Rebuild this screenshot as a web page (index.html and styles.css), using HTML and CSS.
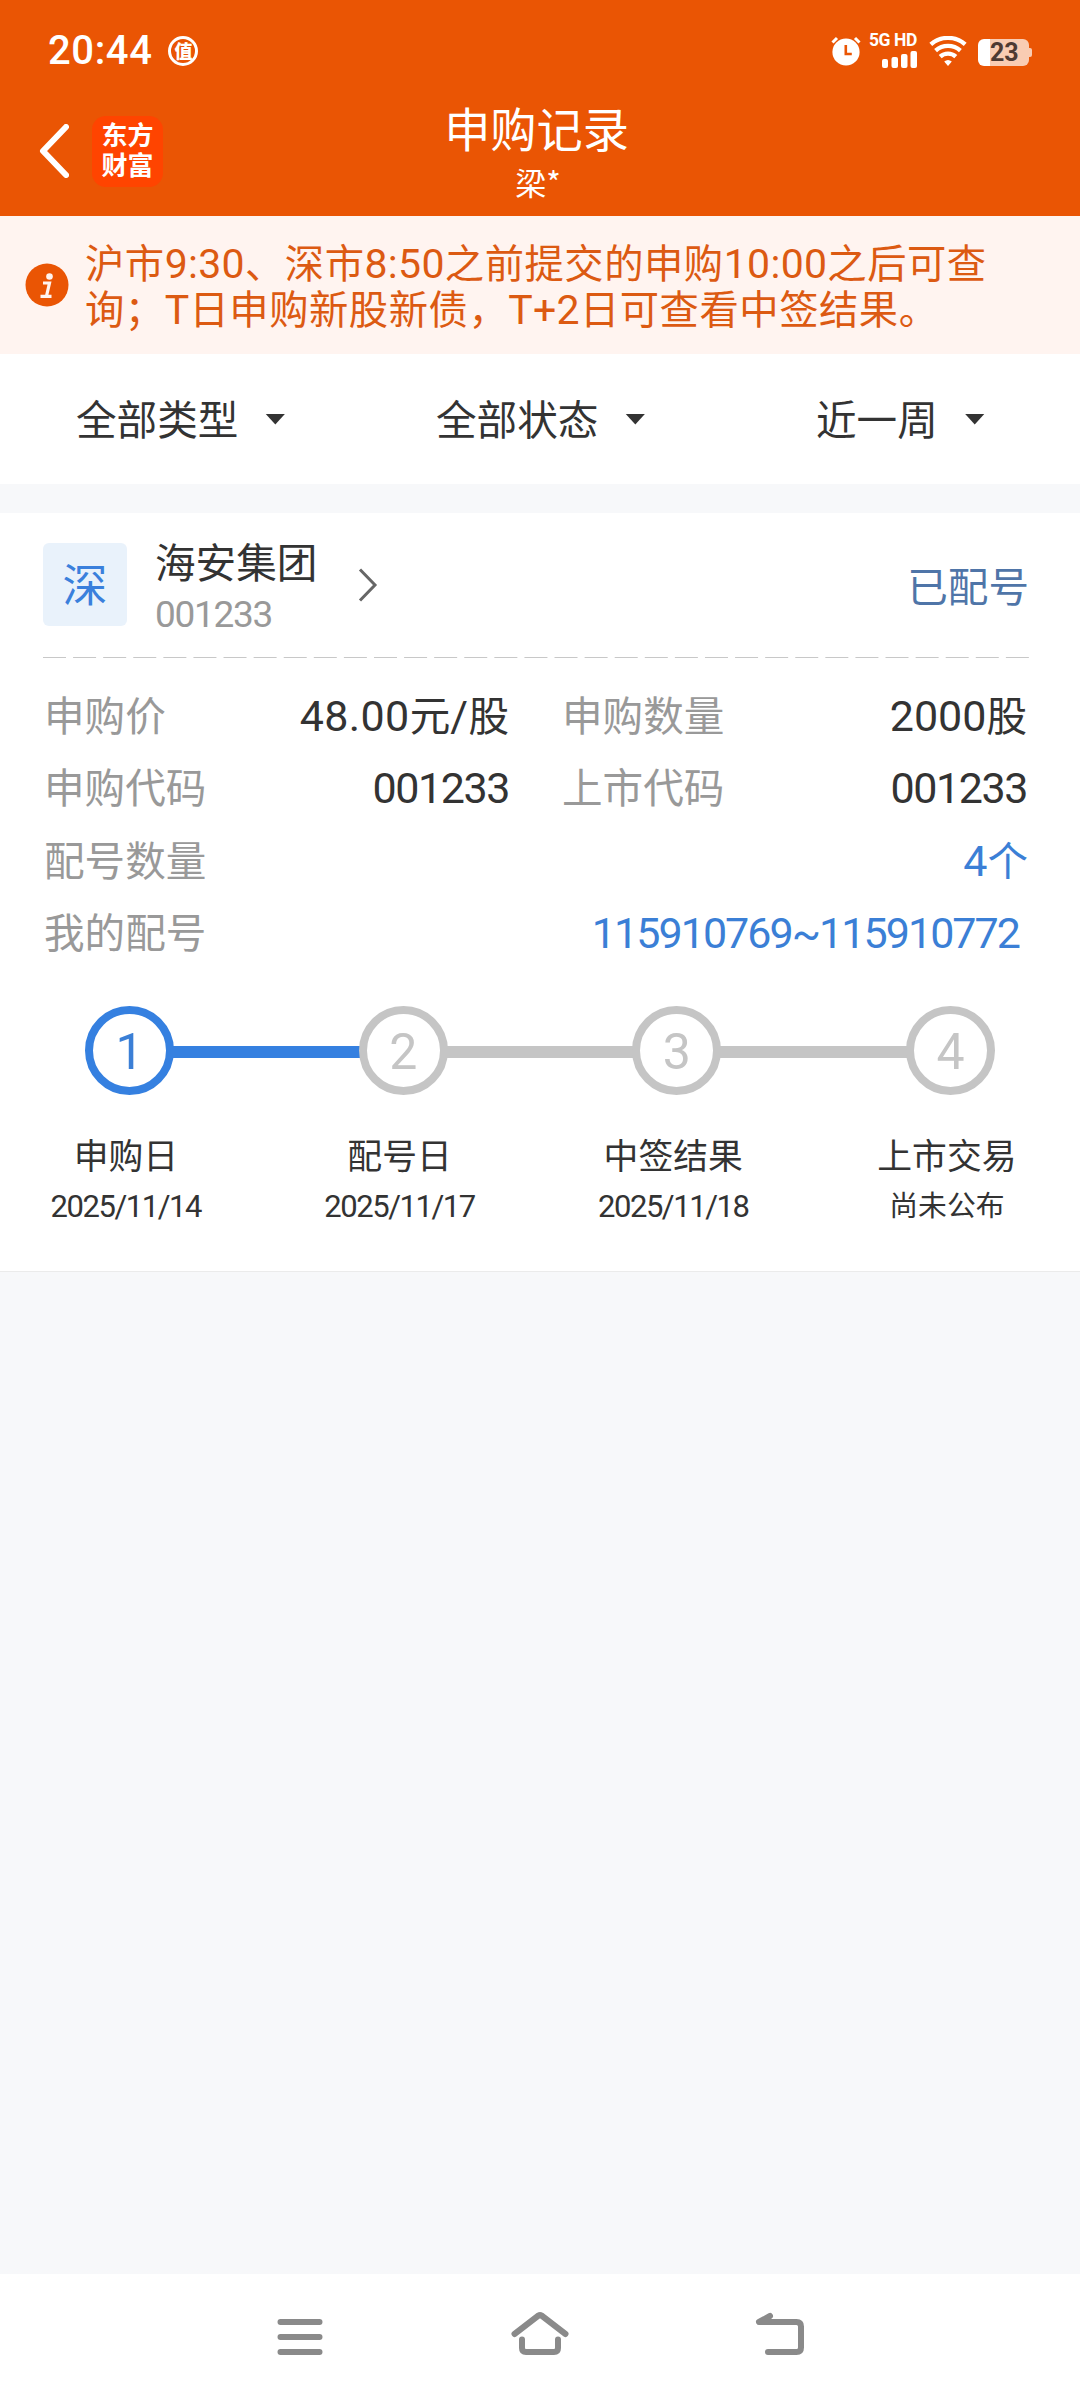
FILE: index.html
```html
<!DOCTYPE html>
<html lang="zh-CN">
<head>
<meta charset="utf-8">
<title>申购记录</title>
<link rel="stylesheet" href="styles.css">
</head>
<body>
<div class="screen">
  <header class="header">
    <div class="status">
      <div class="status-left">
        <span class="clock">20:44</span>
        <span class="app-badge">值</span>
      </div>
      <div class="status-right">
        <svg class="alarm" width="30" height="30" viewBox="0 0 30 30"><circle cx="15" cy="16" r="13.6" fill="#fff"/><path d="M1.5 6.5 6 2M28.500 6.500 24 2" stroke="#fff" stroke-width="3"/><path d="M14.800 9v9h6" fill="none" stroke="#ea5504" stroke-width="2.600"/></svg>
        <div class="cell">
          <span class="cell-text">5G HD</span>
          <svg width="35" height="17" viewBox="0 0 35 17" fill="#fff"><rect x="0" y="8" width="6" height="9" rx="2"/><rect x="9.500" y="6" width="6.500" height="11" rx="2"/><rect x="19" y="3" width="6.500" height="14" rx="2"/><rect x="28.500" y="0" width="6.500" height="17" rx="2"/></svg>
        </div>
        <svg class="wifi" width="38" height="30" viewBox="0 0 38 30" fill="none" stroke="#fff" stroke-width="4.300"><path d="M1.800 8.400a26 26 0 0 1 34.400 0"/><path d="M6.600 14.600a18.500 18.500 0 0 1 24.800 0"/><path d="M11.200 20.700a11.500 11.500 0 0 1 15.600 0"/><path d="M15.200 25.600Q19 22.300 22.800 25.600L19 30Z" fill="#fff" stroke="none"/></svg>
        <div class="battery"><span class="battery-body">23</span><i class="battery-nub"></i></div>
      </div>
    </div>
    <div class="titlebar">
      <div class="titlebar-left">
        <svg width="30" height="54" viewBox="0 0 30 54"><path d="M27 3 4 27 27 51" fill="none" stroke="#fff" stroke-width="6" stroke-linecap="round" stroke-linejoin="round"/></svg>
        <div class="logo"><span>东方</span><span>财富</span></div>
      </div>
      <div class="titles">
        <h1 class="title">申购记录</h1>
        <div class="subtitle">梁*</div>
      </div>
    </div>
  </header>

  <div class="notice">
    <svg class="notice-icon" width="44" height="44" viewBox="0 0 44 44"><circle cx="22" cy="22" r="21.500" fill="#ea5504"/><circle cx="24.500" cy="13.500" r="3.300" fill="#fff4f0"/><path d="M18 20h6.500L21.500 33M15.500 33.300h11" fill="none" stroke="#fff4f0" stroke-width="3.200"/></svg>
    <div class="notice-text">
      <div>沪市<b class="n">9:30</b>、深市<b class="n">8:50</b>之前提交的申购<b class="n">10:00</b>之后可查</div>
      <div>询；<b class="n">T</b>日申购新股新债，<b class="n">T+2</b>日可查看中签结果。</div>
    </div>
  </div>

  <nav class="filters">
    <div class="filter">全部类型<i class="caret"></i></div>
    <div class="filter">全部状态<i class="caret"></i></div>
    <div class="filter">近一周<i class="caret"></i></div>
  </nav>

  <main class="card">
    <div class="stock">
      <div class="market">深</div>
      <div class="stock-id">
        <div class="stock-name">海安集团</div>
        <div class="stock-code">001233</div>
      </div>
      <svg class="go" width="20" height="36" viewBox="0 0 20 36"><path d="M2 2.500 17 18 2 33.500" fill="none" stroke="#666" stroke-width="3"/></svg>
      <div class="state">已配号</div>
    </div>
    <svg class="divider" width="986" height="2" viewBox="0 0 986 2"><path d="M0 .500H986" stroke="#c8c8c8" stroke-width="1" stroke-dasharray="23 7.090"/></svg>
    <div class="details">
      <div class="row">
        <div class="field"><span class="label">申购价</span><span class="value price"><b class="n">48.00</b>元<b class="n">/</b>股</span></div>
        <div class="field"><span class="label">申购数量</span><span class="value"><b class="n">2000</b>股</span></div>
      </div>
      <div class="row">
        <div class="field"><span class="label">申购代码</span><span class="value"><b class="n code">001233</b></span></div>
        <div class="field"><span class="label">上市代码</span><span class="value"><b class="n code">001233</b></span></div>
      </div>
      <div class="row"><span class="label">配号数量</span><span class="value link"><b class="n">4</b>个</span></div>
      <div class="row"><span class="label">我的配号</span><span class="value link range"><b class="n">115910769~115910772</b></span></div>
    </div>
    <div class="track">
      <span class="dot dot-on">1</span><i class="bar bar-on"></i><span class="dot">2</span><i class="bar"></i><span class="dot">3</span><i class="bar"></i><span class="dot">4</span>
    </div>
    <div class="steps">
      <div class="step"><div class="step-name">申购日</div><div class="step-date">2025/11/14</div></div>
      <div class="step"><div class="step-name">配号日</div><div class="step-date">2025/11/17</div></div>
      <div class="step"><div class="step-name">中签结果</div><div class="step-date">2025/11/18</div></div>
      <div class="step"><div class="step-name">上市交易</div><div class="step-date pending">尚未公布</div></div>
    </div>
  </main>

  <footer class="navbar">
    <svg width="60" height="50" viewBox="0 0 60 50"><path d="M10.500 15h39M10.500 30h39M10.500 45h39"/></svg>
    <svg width="60" height="50" viewBox="0 0 60 50"><path d="M4.500 27 28.500 8.500Q30 7.500 31.500 8.500L55.500 27M12 32.500V41q0 4 4 4h28q4 0 4-4V32.500"/></svg>
    <svg width="60" height="50" viewBox="0 0 60 50"><path d="M20 9 9 15H46.500Q51 15 51 19.500V40.500Q51 45 46.500 45H18"/></svg>
  </footer>
</div>
</body>
</html>
```

FILE: styles.css
```css
* { box-sizing: border-box; }
body {
  margin: 0;
  background: #f7f8fa;
  color: #333;
  font-family: "Noto Sans CJK SC", sans-serif;
  font-size: 40.6px;
}
.screen { width: 1080px; height: 2400px; display: flex; flex-direction: column; overflow: hidden; }
svg { display: block; flex: none; }
.n, .clock, .cell-text, .battery, .stock-code, .dot, .step-date { font-family: Roboto, "Noto Sans CJK SC", sans-serif; }
.n { font-size: 43px; font-weight: 400; line-height: 1; }

/* header */
.header { height: 216px; background: #ea5504; color: #fff; }
.status { height: 102px; padding: 0 48px 0 48px; display: flex; align-items: center; justify-content: space-between; }
.status-left { display: flex; align-items: center; gap: 16px; }
.clock { font-size: 40px; font-weight: 500; line-height: 50px; letter-spacing: .6px; }
.app-badge { width: 30px; height: 30px; border: 3px solid #fff; border-radius: 50%; font-size: 18px; font-weight: 900; line-height: 23px; text-align: center; display: flex; justify-content: center; }
.status-right { display: flex; align-items: center; }
.alarm { margin-right: 8px; }
.cell { width: 48px; display: flex; flex-direction: column; align-items: flex-end; gap: 4px; }
.cell-text { height: 13px; font-size: 17.5px; font-weight: 700; line-height: 13px; letter-spacing: -.4px; white-space: nowrap; }
.wifi { margin: 0 11px 0 12px; }
.battery { display: flex; align-items: center; margin-top: 3px; }
.battery-body { width: 51px; height: 27px; border-radius: 6px; background: linear-gradient(90deg, #fff 12px, #f9ccb3 12px); color: #4e3a33; font-size: 25px; font-weight: 700; line-height: 28px; padding-left: 12px; }
.battery-nub { width: 3px; height: 9px; background: #f9ccb3; border-radius: 0 2px 2px 0; }

.titlebar { height: 114px; display: grid; grid-template-columns: 240px 600px 240px; }
.titlebar-left { display: flex; align-items: center; gap: 23px; padding: 0 0 16px 39px; }
.logo { width: 71px; height: 71px; padding-bottom: 4px; border-radius: 14px; background: #ff4400; display: flex; flex-direction: column; align-items: center; justify-content: center; font-size: 26px; font-weight: 700; line-height: 30px; }
.titles { text-align: center; }
.title { margin: 0 7px 0 0; font-size: 46.2px; font-weight: 400; line-height: 50px; }
.subtitle { font-size: 31px; line-height: 60px; margin-right: 4px; }

/* notice */
.notice { height: 138px; background: #fff4f0; display: flex; align-items: center; padding-left: 25px; color: #dc5a12; }
.notice-text { margin-left: 16px; font-size: 39.3px; line-height: 44px; white-space: nowrap; letter-spacing: .55px; }
.notice-text .n { font-size: 41px; letter-spacing: .3px; }

/* filters */
.filters { height: 130px; background: #fff; display: grid; grid-template-columns: 360px 380px 1fr; align-items: center; padding: 0 0 3px 76px; }
.filter { display: flex; align-items: center; line-height: 60px; }
.caret { width: 20px; height: 11px; margin: 3px 0 0 27px; background: #333; clip-path: polygon(0 0, 100% 0, 50% 100%); }

/* card */
.card { margin-top: 29px; height: 759px; background: #fff; border-bottom: 1px solid #ebebeb; padding: 30px 51px 0 43px; }
.stock { height: 114px; display: flex; align-items: flex-start; }
.market { width: 84px; height: 83px; border-radius: 6px; background: #e9f2fb; color: #3a80dc; font-size: 45px; line-height: 80px; text-align: center; }
.stock-id { margin-left: 28px; width: 203px; }
.stock-name { line-height: 36px; }
.stock-code { color: #999; font-size: 37px; line-height: 42px; letter-spacing: -1.3px; margin-top: 15px; }
.go { margin: 24px 0 0; }
.state { margin-left: auto; color: #4f75a8; line-height: 60px; margin-top: 12px; }
.details { margin-top: 19px; }
.row { display: flex; justify-content: space-between; height: 72.3px; line-height: 72.3px; }
.field { display: flex; justify-content: space-between; width: 466px; }
.label { color: #999; margin-left: 1px; }
.field + .field .label { margin-left: -1px; }
.value { white-space: nowrap; margin-right: 1px; }
.field .value { margin-right: 2px; }
.field:first-child .value { margin-right: 0; }
.price .n { letter-spacing: .4px; }
.code { letter-spacing: -1.4px; }
.link { color: #3b7fd6; }
.value.range { margin-right: 10px; letter-spacing: -1.95px; }

/* progress */
.track { margin: 39px 0 0 42px; display: flex; align-items: center; }
.dot { width: 89px; height: 89px; border: 8.5px solid #c5c5c5; border-radius: 50%; color: #c5c5c5; font-size: 50px; line-height: 76px; text-align: center; }
.dot-on { border-color: #3580e0; color: #3b7fd6; }
.bar { width: 188.700px; height: 12px; margin: 3px -2px 0; background: #c5c5c5; }
.bar-on { background: #3580e0; }
.steps { display: grid; grid-template-columns: repeat(4, 273.7px); margin: 37px 0 0 -54px; text-align: center; }
.step-name { font-size: 34.800px; line-height: 44px; }
.step-date { font-size: 31px; line-height: 62px; letter-spacing: -1.45px; }
.pending { font-size: 28.800px; line-height: 60px; letter-spacing: 0; }

/* system navigation */
.navbar { margin-top: auto; height: 126px; background: #fff; display: flex; justify-content: center; gap: 180px; padding-top: 33px; }
.navbar svg { fill: none; stroke: #8a8a8a; stroke-width: 6; stroke-linecap: round; stroke-linejoin: round; }
```
